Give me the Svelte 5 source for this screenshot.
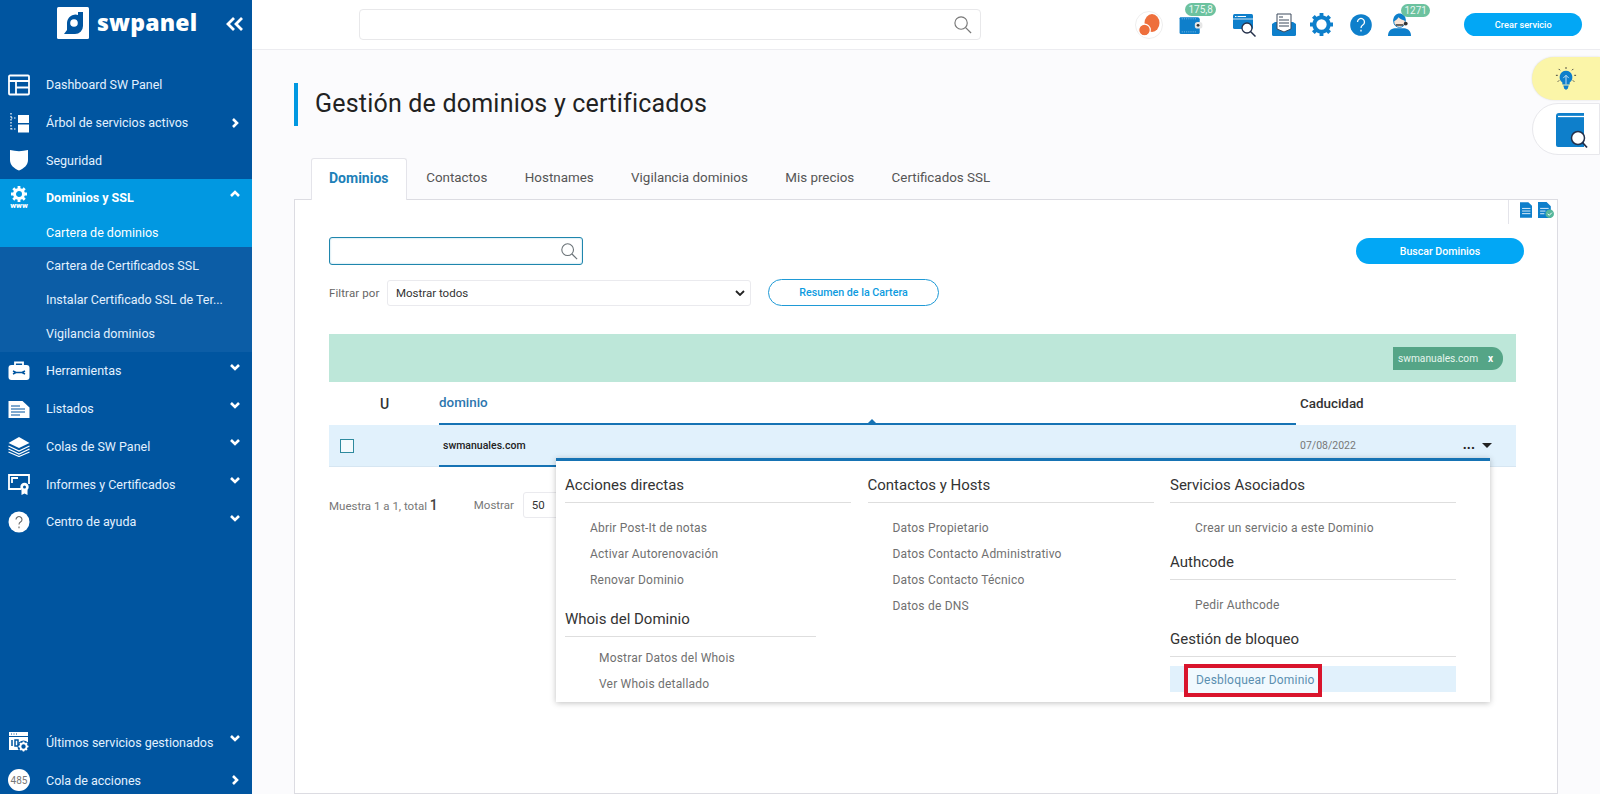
<script>
  const menuTop = [
    { icon: 'dash', label: 'Dashboard SW Panel' },
    { icon: 'tree', label: 'Árbol de servicios activos', arrow: 'right' },
    { icon: 'shield', label: 'Seguridad' }
  ];
  const subMenu = ['Cartera de Certificados SSL', 'Instalar Certificado SSL de Ter...', 'Vigilancia dominios'];
  const menuRest = [
    { icon: 'tools', label: 'Herramientas', arrow: 'down' },
    { icon: 'list', label: 'Listados', arrow: 'down' },
    { icon: 'layers', label: 'Colas de SW Panel', arrow: 'down' },
    { icon: 'cert', label: 'Informes y Certificados', arrow: 'down' },
    { icon: 'help', label: 'Centro de ayuda', arrow: 'down' }
  ];
  const tabs = ['Contactos', 'Hostnames', 'Vigilancia dominios', 'Mis precios', 'Certificados SSL'];
</script>

{#snippet chevron(dir)}
  <svg class="chev" class:up={dir === 'up'} class:side={dir === 'right'} viewBox="0 0 12 12" width="12" height="12">
    <path d="M2 4l4 4 4-4" fill="none" stroke="currentColor" stroke-width="2.6" />
  </svg>
{/snippet}

{#snippet sideIcon(name)}
  <svg class="side-icon" viewBox="0 0 22 22" width="22" height="22">
    {#if name === 'dash'}
      <path d="M2 1.5h18a1 1 0 0 1 1 1v17a1 1 0 0 1-1 1H2a1 1 0 0 1-1-1v-17a1 1 0 0 1 1-1zM1 7h20M8 7v13.500M8 13.500h13" fill="none" stroke="#fff" stroke-width="1.800" />
    {:else if name === 'tree'}
      <path d="M3 1v18M3 6h6M3 17h6" fill="none" stroke="#fff" stroke-width="1.200" stroke-dasharray="1.500 1.500" />
      <rect x="10" y="3" width="11" height="8" fill="#fff" />
      <rect x="10" y="12.500" width="11" height="8" fill="#fff" />
    {:else if name === 'shield'}
      <path d="M2 1c6 1.500 12 1.500 18 0v10c0 5-4 8.500-9 10.500C6 19.500 2 16 2 11z" fill="#fff" />
    {:else if name === 'tools'}
      <path d="M7 5V2.500h8V5" fill="none" stroke="#fff" stroke-width="1.800" />
      <rect x="0.500" y="5" width="21" height="15" rx="3" fill="#fff" />
      <path d="M5 11l3 1.500h6l3-1.500M5 14l3-1.500M14 12.500l3 1.500" fill="none" stroke="#0055a0" stroke-width="1.500" />
    {:else if name === 'list'}
      <path d="M0.500 3h14l7 6.500V20H0.500z" fill="#fff" />
      <path d="M3 8h9M3 11h14M3 14h14M3 17h9" stroke="#0055a0" stroke-width="1.200" />
    {:else if name === 'layers'}
      <path d="M11 2l10.500 6L11 13 .5 8z" fill="#fff" />
      <path d="M.5 11L11 16l10.500-5M.5 14L11 19l10.500-5M.5 17L11 21.500 21.500 17" fill="none" stroke="#fff" stroke-width="1.200" />
    {:else if name === 'cert'}
      <path d="M13 16H1V2h20v9M4 10V5h6M18 8" fill="none" stroke="#fff" stroke-width="1.800" />
      <circle cx="16.500" cy="14" r="4.200" fill="#fff" />
      <circle cx="16.500" cy="14" r="1.500" fill="#0055a0" />
      <path d="M13.500 17h6v5l-3-1.500-3 1.500z" fill="#fff" />
    {:else if name === 'help'}
      <circle cx="11" cy="11" r="10.500" fill="#fff" />
      <path d="M8 8.500a3 3 0 1 1 4.500 2.600c-1 .6-1.500 1.200-1.500 2.400M11 15.500v1.800" fill="none" stroke="#666" stroke-width="1.100" />
    {:else if name === 'recent'}
      <path d="M1 1h19v4H1z" fill="#fff" />
      <path d="M1 6h19v13H1z" fill="#fff" />
      <path d="M3 3h1M5.500 3h1M8 3h1" stroke="#0055a0" stroke-width="1" />
      <path d="M4 9v6M7 9h3v6H7z" stroke="#0055a0" stroke-width="1.500" fill="none" />
      <circle cx="15.500" cy="15.500" r="6" fill="#0055a0" />
      <circle cx="15.500" cy="15.500" r="3.200" fill="none" stroke="#fff" stroke-width="2" />
      <path d="M15.500 10.500v2M15.500 18.500v2M10.500 15.500h2M18.500 15.500h2M12 12l1.400 1.400M17.600 17.600L19 19M19 12l-1.400 1.400M13.400 17.600L12 19" stroke="#fff" stroke-width="1.600" />
    {/if}
  </svg>
{/snippet}

{#snippet glass(color, size)}
  <svg viewBox="0 0 20 20" width={size} height={size}>
    <circle cx="8.500" cy="8.500" r="6.500" fill="none" stroke={color} stroke-width="1.200" />
    <path d="M13.300 13.300L19 19" stroke={color} stroke-width="1.300" />
  </svg>
{/snippet}

<div class="page">
  <aside class="sidebar">
    <div class="brand">
      <span class="logo">
        <svg viewBox="0 0 32 32" width="32" height="32">
          <rect width="32" height="32" rx="1.500" fill="#fff" />
          <path d="M21 5h5v14a8 8 0 0 1-8 8H7l3-4v-7a8.500 8.500 0 0 1 11-8z" fill="#0055a0" />
          <circle cx="17" cy="16" r="3.800" fill="#fff" />
        </svg>
      </span>
      <span class="brand-name">swpanel</span>
      <span class="collapse">
        <svg viewBox="0 0 18 14" width="18" height="14"><path d="M8 1L2 7l6 6M16 1l-6 6 6 6" fill="none" stroke="#fff" stroke-width="2.800" /></svg>
      </span>
    </div>

    <nav class="menu">
      {#each menuTop as item}
        <div class="menu-row">
          {@render sideIcon(item.icon)}
          <span>{item.label}</span>
          {#if item.arrow}{@render chevron(item.arrow)}{/if}
        </div>
      {/each}

      <div class="menu-row current">
        <span class="www-icon">
          <svg viewBox="0 0 16 16" width="16" height="16">
            <circle cx="8" cy="8" r="4.500" fill="none" stroke="#fff" stroke-width="3" />
            <path d="M8 0v3M8 13v3M0 8h3M13 8h3M2.300 2.300l2.100 2.100M11.600 11.600l2.100 2.100M13.700 2.300l-2.100 2.100M4.400 11.600l-2.100 2.100" stroke="#fff" stroke-width="2.800" />
          </svg>
          <b>www</b>
        </span>
        <span>Dominios y SSL</span>
        {@render chevron('up')}
      </div>
      <div class="sub-row current-sub">Cartera de dominios</div>
      <div class="sub-list">
        {#each subMenu as label}
          <div class="sub-row">{label}</div>
        {/each}
      </div>

      {#each menuRest as item}
        <div class="menu-row">
          {@render sideIcon(item.icon)}
          <span>{item.label}</span>
          {@render chevron(item.arrow)}
        </div>
      {/each}
    </nav>

    <div class="menu bottom">
      <div class="menu-row">
        {@render sideIcon('recent')}
        <span>Últimos servicios gestionados</span>
        {@render chevron('down')}
      </div>
      <div class="menu-row">
        <span class="count">485</span>
        <span>Cola de acciones</span>
        {@render chevron('right')}
      </div>
    </div>
  </aside>

  <div class="main">
    <header class="topbar">
      <div class="global-search">{@render glass('#777', 19)}</div>
      <div class="top-icons">
        <span class="ico avatar">
          <svg viewBox="0 0 28 28" width="28" height="28">
            <circle cx="14" cy="14" r="13.500" fill="#fff" stroke="#eee" />
            <ellipse cx="17" cy="12" rx="7.500" ry="9" fill="#ee6f3c" />
            <circle cx="9.500" cy="19" r="5.800" fill="#ee6f3c" stroke="#fff" stroke-width="1.200" />
          </svg>
        </span>
        <span class="ico wallet">
          <svg viewBox="0 0 22 18" width="24" height="19.600">
            <path d="M1 2h16a2 2 0 0 1 2 2v12a1.500 1.500 0 0 1-1.500 1.500H2A1.500 1.500 0 0 1 .5 16V3z" fill="#0e7fcb" />
            <rect x="14.500" y="6.500" width="7" height="6" rx="2.500" fill="#e6e6e6" />
            <circle cx="17.500" cy="9.500" r="1.300" fill="#333" />
            <path d="M2.500 3.500h13M2.500 15.500h13" stroke="#8cc6ea" stroke-width=".7" stroke-dasharray="1 1" />
          </svg>
          <em class="badge">175,8</em>
        </span>
        <span class="ico browser">
          <svg viewBox="0 0 24 24" width="24" height="24">
            <rect x="0" y="1" width="20" height="15" rx="1.500" fill="#0e7fcb" />
            <path d="M2 3.500h1.500M4.500 3.500H13" stroke="#fff" stroke-width="1" />
            <path d="M0 6h20" stroke="#fff" stroke-width=".8" />
            <circle cx="14" cy="15" r="5" fill="#fff" stroke="#24304a" stroke-width="1.300" />
            <path d="M17.500 18.500L22.500 23.500" stroke="#24304a" stroke-width="1.500" />
          </svg>
        </span>
        <span class="ico mail">
          <svg viewBox="0 0 24 24" width="24" height="24">
            <path d="M0 11l3-2h18l3 2v10.500a1.500 1.500 0 0 1-1.500 1.500h-21A1.500 1.500 0 0 1 0 21.500z" fill="#0e7fcb" />
            <path d="M5 1h14v15l-7 3-7-3z" fill="#fff" stroke="#3c4a5c" stroke-width="1" />
            <path d="M7 4h4M7 7h10M7 10h10M7 13h10" stroke="#3c4a5c" stroke-width="1.200" />
          </svg>
        </span>
        <span class="ico gear">
          <svg viewBox="0 0 24 24" width="23" height="23">
            <circle cx="12" cy="12" r="7.500" fill="none" stroke="#0e7fcb" stroke-width="4.200" />
            <path d="M12 0v4.500M12 19.500V24M0 12h4.500M19.500 12H24M3.500 3.500l3.200 3.200M17.300 17.300l3.200 3.200M20.500 3.500l-3.200 3.200M6.700 17.300l-3.200 3.200" stroke="#0e7fcb" stroke-width="4" />
          </svg>
        </span>
        <span class="ico question">
          <svg viewBox="0 0 22 22" width="22" height="22">
            <circle cx="11" cy="11" r="10.800" fill="#0e7fcb" />
            <path d="M7.500 8a3.500 3.500 0 1 1 5.300 3c-1.200.7-1.800 1.500-1.800 3M11 15.800v1.800" fill="none" stroke="#fff" stroke-width="1.300" />
          </svg>
        </span>
        <span class="ico agent">
          <svg viewBox="0 0 24 24" width="23" height="23">
            <path d="M0 24c0-5 3-7.500 7-8h10c4 .5 7 3 7 8z" fill="#0e7fcb" />
            <circle cx="12" cy="9" r="6" fill="#fbe5d6" stroke="#0e7fcb" stroke-width="1" />
            <path d="M5.500 9C5 3 9 .5 12 .5S19 3 18.500 8c-3-.5-6-1.500-7.500-3.500C10 6.500 8 8 5.500 9z" fill="#0e7fcb" />
            <path d="M8 12.500h8" stroke="#333" stroke-width="1.500" />
            <circle cx="18.500" cy="11" r="2" fill="#333" />
          </svg>
          <em class="badge">1271</em>
        </span>
      </div>
      <button class="pill top-cta">Crear servicio</button>
    </header>

    <main class="content">
      <h1>Gestión de dominios y certificados</h1>

      <div class="tabs">
        <span class="tab active">Dominios</span>
        {#each tabs as t}
          <span class="tab">{t}</span>
        {/each}
      </div>

      <section class="panel">
        <div class="doc-icons">
          <svg viewBox="0 0 12 15" width="12.500" height="16">
            <path d="M0 0h8l4 4v11H0z" fill="#0e7fcb" />
            <path d="M2 6h8M2 8.500h8M2 11h8" stroke="#fff" stroke-width=".8" />
          </svg>
          <svg viewBox="0 0 15 15" width="16" height="16">
            <path d="M0 0h8l4 4v11H0z" fill="#0e7fcb" />
            <path d="M2 6h8M2 8.500h5M2 11h4" stroke="#fff" stroke-width=".8" />
            <circle cx="11" cy="11" r="4" fill="#56b79b" />
            <path d="M9 11l1.500 1.500L13 10" fill="none" stroke="#fff" stroke-width=".9" />
          </svg>
        </div>

        <div class="tools">
          <div class="filters">
            <div class="domain-search">{@render glass('#6b7378', 18)}</div>
            <div class="filter-row">
              <span class="filter-label">Filtrar por</span>
              <div class="select wide">Mostrar todos
                <svg viewBox="0 0 10 6" width="10" height="6"><path d="M1 1l4 4 4-4" fill="none" stroke="#222" stroke-width="1.800" /></svg>
              </div>
              <button class="pill outline">Resumen de la Cartera</button>
            </div>
          </div>
          <button class="pill find">Buscar Dominios</button>
        </div>

        <div class="selected-band">
          <span class="chip">swmanuales.com <b>x</b></span>
        </div>

        <div class="table-head">
          <span class="col-check"></span>
          <span class="col-u">U</span>
          <span class="col-domain sorted">dominio</span>
          <span class="col-date">Caducidad</span>
        </div>
        <div class="table-row">
          <span class="col-check"><i class="box"></i></span>
          <span class="col-u"></span>
          <span class="col-domain name">swmanuales.com</span>
          <span class="col-date when">07/08/2022</span>
          <span class="col-actions"><b class="dots">...</b><i class="caret"></i></span>

          <div class="dropdown">
            <div class="drop-col">
              <h3>Acciones directas</h3>
              <ul>
                <li>Abrir Post-It de notas</li>
                <li>Activar Autorenovación</li>
                <li>Renovar Dominio</li>
              </ul>
              <div class="narrow">
                <h3>Whois del Dominio</h3>
                <ul class="deep">
                  <li>Mostrar Datos del Whois</li>
                  <li>Ver Whois detallado</li>
                </ul>
              </div>
            </div>
            <div class="drop-col">
              <h3>Contactos y Hosts</h3>
              <ul>
                <li>Datos Propietario</li>
                <li>Datos Contacto Administrativo</li>
                <li>Datos Contacto Técnico</li>
                <li>Datos de DNS</li>
              </ul>
            </div>
            <div class="drop-col">
              <h3>Servicios Asociados</h3>
              <ul>
                <li>Crear un servicio a este Dominio</li>
              </ul>
              <h3>Authcode</h3>
              <ul>
                <li>Pedir Authcode</li>
              </ul>
              <h3>Gestión de bloqueo</h3>
              <ul class="lock">
                <li class="hot"><span class="marked">Desbloquear Dominio</span></li>
              </ul>
            </div>
          </div>
        </div>

        <div class="pager">
          <span>Muestra 1 a 1, total <b>1</b></span>
          <span class="show">Mostrar</span>
          <div class="select small">50</div>
        </div>
      </section>
    </main>

    <div class="float tip">
      <svg viewBox="0 0 24 26" width="22" height="24">
        <path d="M12 0v2M1 9h2M21 9h2M4 2l1.500 1.500M20 2l-1.500 1.500M3 16l1.500-1.500M21 16l-1.500-1.500" stroke="#333" stroke-width="1" />
        <path d="M12 4a7 7 0 0 1 4 12.700V19H8v-2.300A7 7 0 0 1 12 4z" fill="#0e7fcb" />
        <path d="M9 12l3-3 3 3M12 9v10" fill="none" stroke="#cfe6f6" stroke-width="1" />
        <path d="M9 20h6l-1 3-2 2-2-2z" fill="#0e7fcb" />
      </svg>
    </div>
    <div class="float guide">
      <svg viewBox="0 0 32 36" width="32" height="36">
        <path d="M0 3a3 3 0 0 1 3-3h25v34H2a2 2 0 0 1-2-2z" fill="#0e7fcb" />
        <path d="M2 3.500h26" stroke="#fff" stroke-width="1.300" />
        <circle cx="22" cy="25" r="6.500" fill="#fff" stroke="#24304a" stroke-width="1.500" />
        <path d="M26.500 29.500L31 34.500" stroke="#24304a" stroke-width="1.800" />
      </svg>
    </div>
  </div>
</div>

<style>
  :global(body) {
    margin: 0;
    background: #fbfbfd;
    font-family: Roboto, "Liberation Sans", sans-serif;
    overflow: hidden;
  }

  .page {
    display: flex;
    height: 794px;
    overflow: hidden;
  }

  /* sidebar */
  .sidebar {
    width: 252px;
    flex: none;
    background: #0055a0;
    color: #e3f1ff;
    display: flex;
    flex-direction: column;
    justify-content: space-between;
  }
  .brand {
    padding: 7px 8px 0 57px;
    display: flex;
    align-items: flex-start;
    height: 39px;
  }
  .logo {
    display: block;
    height: 32px;
  }
  .brand-name {
    margin-left: 8px;
    font-family: "Open Sans", sans-serif;
    font-weight: 800;
    font-size: 23px;
    line-height: 30px;
    color: #fff;
    letter-spacing: 0.2px;
  }
  .collapse {
    margin-left: auto;
    padding-top: 9px;
  }
  .menu {
    display: flex;
    flex-direction: column;
  }
  nav.menu {
    flex: 1;
    padding-top: 20px;
  }
  .menu.bottom {
    margin-bottom: -5px;
  }
  .menu-row {
    height: 37.7px;
    display: flex;
    align-items: center;
    padding: 0 11px 0 8px;
    gap: 16px;
    font-size: 12.500px;
  }
  .menu-row > span:nth-child(2) {
    flex: 1;
    white-space: nowrap;
  }
  .side-icon {
    flex: none;
  }
  .chev {
    color: #fff;
    margin-top: -8px;
    flex: none;
  }
  .chev.up {
    transform: rotate(180deg);
  }
  .chev.side {
    transform: rotate(-90deg);
    margin-top: 0;
  }
  .current {
    background: #0198e1;
    font-weight: 700;
    color: #fff;
  }
  .www-icon {
    width: 22px;
    flex: none;
    display: flex;
    flex-direction: column;
    align-items: center;
    line-height: 8px;
  }
  .www-icon b {
    font-size: 8px;
  }
  .sub-list {
    background: #0c5da6;
    padding: 2px 0;
  }
  .sub-row {
    height: 33.800px;
    display: flex;
    align-items: center;
    padding-left: 46px;
    font-size: 12.500px;
    white-space: nowrap;
  }
  .current-sub {
    background: #0198e1;
    color: #fff;
    height: 30px;
    padding-top: 2px;
    box-sizing: border-box;
  }
  .count {
    width: 22px;
    height: 22px;
    border-radius: 50%;
    background: #fff;
    color: #777;
    font-size: 10px;
    flex: none;
    display: flex;
    align-items: center;
    justify-content: center;
  }

  /* main column */
  .main {
    flex: 1;
    min-width: 0;
    position: relative;
    display: flex;
    flex-direction: column;
  }
  .topbar {
    height: 49px;
    flex: none;
    background: #fff;
    border-bottom: 1px solid #ececf0;
    display: flex;
    align-items: center;
    padding: 0 18px 0 107px;
  }
  .global-search {
    width: 625px;
    height: 31px;
    border: 1px solid #e8e8ea;
    border-radius: 4px;
    box-sizing: border-box;
    display: flex;
    align-items: center;
    justify-content: flex-end;
    padding-right: 8px;
  }
  .top-icons {
    display: flex;
    align-items: center;
    margin-left: 154px;
  }
  .ico {
    position: relative;
    display: block;
    line-height: 0;
  }
  .avatar { width: 44px; }
  .wallet { width: 54px; }
  .browser { width: 39px; }
  .mail { width: 38px; }
  .gear { width: 40px; }
  .question { width: 38px; }
  .agent { width: 76px; }
  .badge {
    position: absolute;
    top: -12px;
    left: 6px;
    background: #6cc29f;
    color: #e9f7f1;
    font-style: normal;
    font-size: 10px;
    line-height: 13px;
    padding: 0 3px;
    border-radius: 7px;
  }
  .agent .badge {
    left: 13px;
    top: -9px;
  }
  .pill {
    border: 0;
    border-radius: 14px;
    background: #02a7f5;
    color: #fff;
    font-family: Roboto, sans-serif;
    font-weight: 500;
    font-size: 9.200px;
    padding: 0;
  }
  .top-cta {
    width: 118px;
    height: 23px;
  }

  .content {
    flex: 1;
    padding: 33px 42px 0 42px;
    display: flex;
    flex-direction: column;
    min-height: 0;
  }
  h1 {
    margin: 0 0 32px;
    height: 43px;
    line-height: 41px;
    border-left: 4px solid #0198e1;
    padding-left: 17px;
    font-size: 25px;
    font-weight: 400;
    color: #222;
    letter-spacing: 0.2px;
  }
  .tabs {
    display: flex;
    padding-left: 17px;
    height: 42px;
    margin-bottom: -1px;
    position: relative;
    z-index: 1;
    font-size: 13.400px;
    color: #555;
  }
  .tab {
    padding: 0 18.700px;
    line-height: 39px;
    white-space: nowrap;
  }
  .tab.active {
    background: #fff;
    color: #2080b8;
    font-weight: 700;
    font-size: 14px;
    border: 1px solid #e4e4ea;
    border-bottom: 0;
    border-radius: 3px 3px 0 0;
    padding: 0 18px 0 17px;
  }
  .panel {
    flex: 1;
    background: #fff;
    border: 1px solid #dcdce2;
    padding: 37px 41px 0 34px;
    position: relative;
    min-height: 0;
  }
  .doc-icons {
    position: absolute;
    right: 3px;
    top: 0;
    padding: 2px 0 6px 11px;
    border-left: 1px solid #e4e4ea;
    display: flex;
    gap: 6px;
    line-height: 0;
  }
  .tools {
    display: flex;
    justify-content: space-between;
    align-items: flex-start;
    height: 97px;
  }
  .domain-search {
    width: 254px;
    height: 28px;
    box-sizing: border-box;
    border: 1px solid #1f86ad;
    border-radius: 3px;
    box-shadow: inset 0 0 2px #9ecde0;
    display: flex;
    align-items: center;
    justify-content: flex-end;
    padding-right: 4px;
  }
  .filter-row {
    display: flex;
    align-items: center;
    margin-top: 14px;
  }
  .filter-label {
    font-size: 11.500px;
    color: #666;
    width: 58px;
    letter-spacing: 0.1px;
  }
  .select {
    border: 1px solid #eaeaee;
    border-radius: 3px;
    box-sizing: border-box;
    height: 26px;
    display: flex;
    align-items: center;
    font-size: 11.500px;
    color: #333;
  }
  .select.wide {
    width: 364px;
    justify-content: space-between;
    padding: 0 5px 0 8px;
  }
  .select.small {
    width: 50px;
    padding-left: 8px;
  }
  .outline {
    margin-left: 17px;
    width: 171px;
    height: 27px;
    background: #fff;
    border: 1px solid #1f9ad6;
    color: #0c9be0;
    font-size: 10.700px;
  }
  .find {
    width: 168px;
    height: 26px;
    margin: 1px -8px 0 0;
    font-size: 10.600px;
  }

  .selected-band {
    height: 48px;
    background: #bde7d9;
    display: flex;
    align-items: center;
    justify-content: flex-end;
    padding-right: 13px;
  }
  .chip {
    width: 110px;
    height: 23px;
    box-sizing: border-box;
    background: #55a587;
    color: #e5f5ee;
    font-size: 10.200px;
    border-radius: 0 11px 11px 0;
    display: flex;
    align-items: center;
    justify-content: space-between;
    padding: 0 10px 0 5px;
    white-space: nowrap;
  }
  .chip b {
    color: #fff;
    font-size: 10px;
  }

  .table-head,
  .table-row {
    display: flex;
    align-items: center;
  }
  .table-head {
    height: 43px;
    font-size: 13.400px;
    font-weight: 500;
    color: #333;
  }
  .col-check {
    width: 51px;
    flex: none;
    padding-left: 11px;
    box-sizing: border-box;
    line-height: 0;
  }
  .col-u {
    width: 59px;
    flex: none;
    font-size: 14px;
  }
  .col-domain {
    flex: 1;
    align-self: stretch;
    display: flex;
    align-items: center;
  }
  .col-date {
    width: 220px;
    flex: none;
    padding-left: 4px;
    box-sizing: border-box;
  }
  .col-actions {
    position: absolute;
    right: 24px;
    top: 14px;
    display: flex;
    align-items: center;
    gap: 7px;
  }
  .sorted {
    color: #2d76ae;
    border-bottom: 2px solid #1673b4;
    position: relative;
    height: 43px;
    box-sizing: border-box;
  }
  .sorted::after {
    content: "";
    position: absolute;
    left: 50%;
    bottom: 0;
    border: 4px solid transparent;
    border-bottom-color: #1673b4;
    border-top: 0;
  }
  .table-row {
    height: 42px;
    background: #e1f1fc;
    border-bottom: 1px solid #d6e6f2;
    box-sizing: border-box;
    position: relative;
    font-size: 10.500px;
  }
  .box {
    display: block;
    width: 14px;
    height: 14px;
    box-sizing: border-box;
    border: 1.500px solid #2e8a9e;
    background: #f4fafd;
  }
  .name {
    color: #222;
    font-weight: 500;
    padding-left: 4px;
    border-bottom: 2px solid #1673b4;
    margin-bottom: -1px;
  }
  .when {
    color: #777;
  }
  .dots {
    font-size: 14px;
    line-height: 14px;
    color: #222;
    margin-top: -2px;
  }
  .caret {
    width: 0;
    height: 0;
    border: 5px solid transparent;
    border-top: 5px solid #222;
    border-bottom: 0;
  }

  .dropdown {
    position: absolute;
    left: 227px;
    top: 33px;
    width: 934px;
    height: 244px;
    box-sizing: border-box;
    background: #fff;
    border-top: 3px solid #1673b4;
    box-shadow: 0 1px 6px rgba(0, 0, 0, 0.25);
    padding: 6px 34px 0 9px;
    display: grid;
    grid-template-columns: repeat(3, 286px);
    column-gap: 16.500px;
    z-index: 3;
    font-size: 12px;
    color: #707070;
  }
  h3 {
    margin: 0;
    height: 36px;
    line-height: 36px;
    box-sizing: border-box;
    font-size: 15px;
    font-weight: 400;
    color: #333;
    border-bottom: 1px solid #dedede;
  }
  ul {
    list-style: none;
    margin: 0;
    padding: 12px 0 3px;
  }
  li {
    height: 26px;
    line-height: 26px;
    padding-left: 25px;
    white-space: nowrap;
    letter-spacing: 0.2px;
  }
  .narrow {
    width: 251px;
    margin-top: 5px;
  }
  .deep {
    padding-top: 8px;
  }
  .deep li {
    padding-left: 34px;
  }
  .lock {
    padding-top: 9px;
  }
  .hot {
    background: #e1f1fc;
    color: #5b8fb0;
    padding-left: 14px;
  }
  .marked {
    display: inline-block;
    border: 4px solid #d9142c;
    background: #f1f9fe;
    height: 33px;
    width: 138px;
    box-sizing: border-box;
    line-height: 25px;
    padding-left: 8px;
    margin-top: -2px;
    vertical-align: top;
  }

  .pager {
    display: flex;
    align-items: center;
    padding-top: 25px;
    font-size: 11.500px;
    color: #777;
  }
  .pager b {
    font-weight: 500;
    font-size: 14px;
    color: #444;
  }
  .show {
    margin-left: 36px;
    width: 49px;
  }

  .float {
    position: absolute;
    right: 0;
    width: 68px;
    box-sizing: border-box;
    border-radius: 26px 0 0 26px;
    display: flex;
    align-items: center;
    padding-left: 23px;
  }
  .tip {
    top: 57px;
    height: 43px;
    background: #fbf5a8;
    box-shadow: 0 0 2px rgba(0, 0, 0, 0.15);
  }
  .guide {
    top: 103px;
    height: 52px;
    padding-top: 3px;
    background: #fff;
    border: 1px solid #e8e8ec;
  }
</style>
